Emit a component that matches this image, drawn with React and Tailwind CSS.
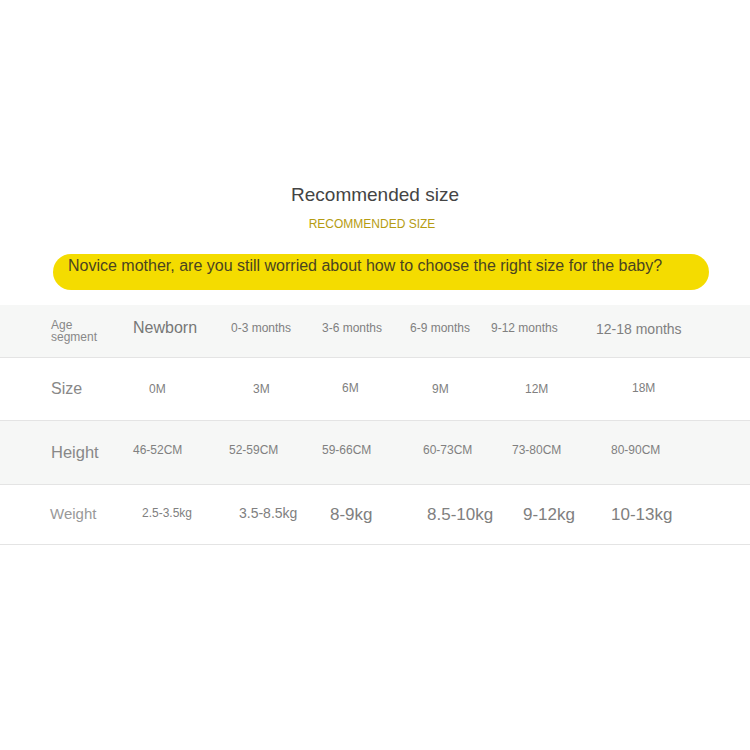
export default function App() {
  return (
    <div className="w-[750px] h-[750px] bg-white font-['Liberation_Sans',Arial,sans-serif] overflow-hidden">
      <div className="pt-[184px] flex flex-col items-center">
        <h1 className="text-[19px] leading-[22px] text-[#444]">Recommended size</h1>
        <p className="mt-[11px] -ml-[6px] text-[12px] leading-[14px] text-[#b59c12]">RECOMMENDED SIZE</p>
      </div>

      <div className="mt-[23px] mx-[53px] w-[656px] h-[36px] rounded-full bg-[#f4dc00] flex items-start pt-[2px] pl-[15px]">
        <span className="text-[16px] leading-[20px] text-[#4a4420]">
          Novice mother, are you still worried about how to choose the right size for the baby?
        </span>
      </div>

      <div className="mt-[15px] text-[#808080]">
        {/* Age segment */}
        <div className="h-[53px] bg-[#f6f7f6] border-b border-[#e4e4e4] flex items-center pl-[51px] text-[12px]">
          <div className="w-[82px] leading-[12.5px] text-[#888]">Age<br />segment</div>
          <div className="w-[98px] text-[16px] text-[#777] -mt-[6px]">Newborn</div>
          <div className="w-[91px] -mt-[6px]">0-3 months</div>
          <div className="w-[88px] -mt-[6px]">3-6 months</div>
          <div className="w-[81px] -mt-[6px]">6-9 months</div>
          <div className="w-[105px] -mt-[6px]">9-12 months</div>
          <div className="text-[14px] -mt-[4px]">12-18 months</div>
        </div>

        {/* Size */}
        <div className="h-[63px] bg-white border-b border-[#e4e4e4] flex items-center pl-[51px] text-[12px]">
          <div className="w-[98px] text-[16px] text-[#888]">Size</div>
          <div className="w-[104px]">0M</div>
          <div className="w-[89px]">3M</div>
          <div className="w-[90px] -mt-[2px]">6M</div>
          <div className="w-[93px]">9M</div>
          <div className="w-[107px]">12M</div>
          <div className="-mt-[2px]">18M</div>
        </div>

        {/* Height */}
        <div className="h-[64px] bg-[#f6f7f6] border-b border-[#e4e4e4] flex items-center pl-[51px] text-[12px]">
          <div className="w-[82px] text-[16.5px] text-[#888]">Height</div>
          <div className="w-[96px] -mt-[5px]">46-52CM</div>
          <div className="w-[93px] -mt-[5px]">52-59CM</div>
          <div className="w-[101px] -mt-[5px]">59-66CM</div>
          <div className="w-[89px] -mt-[5px]">60-73CM</div>
          <div className="w-[99px] -mt-[5px]">73-80CM</div>
          <div className="-mt-[5px]">80-90CM</div>
        </div>

        {/* Weight */}
        <div className="h-[60px] bg-white border-b border-[#e4e4e4] flex items-center pl-[50px]">
          <div className="w-[92px] text-[15px] text-[#999]">Weight</div>
          <div className="w-[97px] text-[12px] -mt-[4px]">2.5-3.5kg</div>
          <div className="w-[91px] text-[14px] -mt-[2px]">3.5-8.5kg</div>
          <div className="w-[97px] text-[17px]">8-9kg</div>
          <div className="w-[96px] text-[17px]">8.5-10kg</div>
          <div className="w-[88px] text-[17px]">9-12kg</div>
          <div className="text-[17px]">10-13kg</div>
        </div>
      </div>
    </div>
  );
}
